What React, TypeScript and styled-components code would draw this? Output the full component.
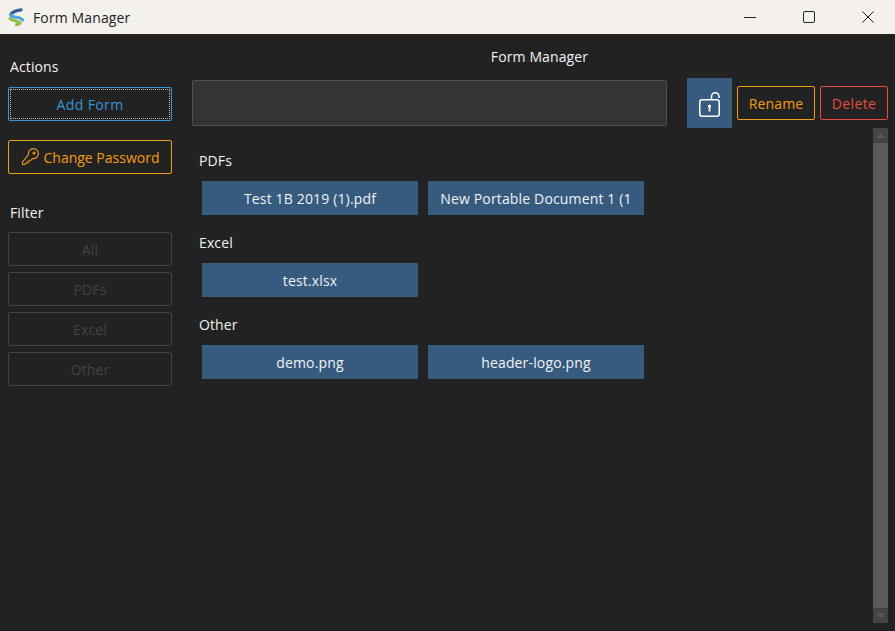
import React from 'react';
import styled, {createGlobalStyle} from 'styled-components';

const Global = createGlobalStyle`
  html, body {
    margin: 0;
    height: 100%;
    background: #222222;
    overflow: hidden;
  }
  * {
    box-sizing: border-box;
  }
`;

const Window = styled.div`
  width: 895px;
  height: 631px;
  display: flex;
  flex-direction: column;
  font-family: "Open Sans", "Noto Sans", sans-serif;
  font-size: 14px;
  letter-spacing: 0.12px;
  color: #f2f2f2;
  background: #222222;
`;

const TitleBar = styled.div`
  height: 34px;
  flex: none;
  display: flex;
  align-items: center;
  gap: 5px;
  background: #f4f1ed;
  color: #222;
  padding-left: 8px;
`;

const AppName = styled.div`
  margin-left: 3px;
  flex: 1;
`;

const WinButton = styled.div`
  width: 54px;
  height: 34px;
  display: flex;
  align-items: center;
  justify-content: center;
`;

const Body = styled.div`
  flex: 1;
  display: flex;
  min-height: 0;
`;

const Sidebar = styled.div`
  width: 180px;
  flex: none;
  padding: 23px 8px 0;
  display: flex;
  flex-direction: column;
`;

const SideLabel = styled.div`
  height: 20px;
  line-height: 20px;
  padding-left: 2px;
  margin-bottom: ${({$gap}: {$gap: number}) => $gap}px;
`;

const OutlineButton = styled.div<{$color: string; $dotted?: boolean}>`
  position: relative;
  height: 34px;
  display: flex;
  align-items: center;
  justify-content: center;
  gap: 5px;
  border: 1px solid ${({$color}) => $color};
  border-radius: 2px;
  color: ${({$color}) => $color};
  ${({$dotted}) => $dotted && `
    &::after {
      content: "";
      position: absolute;
      inset: 1px;
      border: 1px dotted #d8e8f4;
      opacity: 0.8;
    }
  `}
`;

const AddForm = styled(OutlineButton)`
  margin-bottom: 19px;
  letter-spacing: 0.4px;
`;

const ChangePassword = styled(OutlineButton)`
  margin-bottom: 29px;
  letter-spacing: 0;
`;

const FilterList = styled.div`
  display: flex;
  flex-direction: column;
  gap: 6px;
`;

const Main = styled.div`
  flex: 1;
  min-width: 0;
  padding: 12px 7px 8px 12px;
  display: flex;
  flex-direction: column;
`;

const Heading = styled.div`
  height: 22px;
  line-height: 22px;
  text-align: center;
  padding-right: 1px;
  margin-bottom: 10px;
`;

const Toolbar = styled.div`
  display: flex;
  align-items: center;
  height: 50px;
  flex: none;
`;

const SearchBox = styled.div`
  width: 475px;
  height: 46px;
  background: #333333;
  border: 1px solid #505050;
  border-radius: 2px;
  margin-right: 20px;
`;

const LockButton = styled.div`
  width: 45px;
  height: 50px;
  padding-top: 3px;
  background: #375a7f;
  display: flex;
  align-items: center;
  justify-content: center;
  margin-right: 5px;
`;

const Rename = styled(OutlineButton)`
  width: 78px;
  margin-right: 5px;
`;

const Delete = styled(OutlineButton)`
  width: 68px;
  letter-spacing: 0.4px;
`;

const Content = styled.div`
  flex: 1;
  display: flex;
  min-height: 0;
`;

const Sections = styled.div`
  flex: 1;
  padding: 23px 0 0 7px;
`;

const SectionTitle = styled.div`
  height: 20px;
  line-height: 20px;
  margin-bottom: 10px;
`;

const FileRow = styled.div`
  display: flex;
  gap: 10px;
  padding-left: 3px;
  margin-bottom: 18px;
`;

const FileButton = styled.div`
  width: 216px;
  height: 34px;
  padding: 1px 12px 0;
  background: #375a7f;
  color: #f2f2f2;
  line-height: 34px;
  text-align: center;
  white-space: nowrap;
  letter-spacing: 0.15px;
`;

const Scrollbar = styled.div`
  width: 15px;
  flex: none;
  display: flex;
  flex-direction: column;
  background: #5a5a5a;
`;

const ScrollArrow = styled.div`
  height: 15px;
  flex: none;
  background: #444444;
  display: flex;
  align-items: center;
  justify-content: center;
`;

const ScrollThumb = styled.div`
  flex: 1;
`;

const Logo = () => (
  <svg width="17" height="18" viewBox="0 0 17 18" fill="none" strokeWidth="3.200" strokeLinecap="round">
    <path d="M13 1.800 C8 2.600 3 4.500 2.800 7" stroke="#2f5f9e"/>
    <path d="M3 7.500 C5 10 13 8.500 14.500 12" stroke="#4ba6dc"/>
    <path d="M2 10.500 C3.500 13 11 12.500 12 15 C11.500 16.200 10 16.500 8.500 16.500" stroke="#8fc04a"/>
  </svg>
);

const UnlockIcon = () => (
  <svg width="22" height="25" viewBox="0 0 22 25" fill="none" stroke="#ffffff" strokeWidth="1.500">
    <rect x="0.750" y="7.750" width="19.500" height="16.500" rx="2.500"/>
    <path d="M12.500 7.500 V4.500 a3.750 3.750 0 0 1 7.500 0 V6"/>
    <circle cx="10.500" cy="14" r="1.600" fill="#ffffff" stroke="none"/>
    <path d="M10.500 14 V19.500" strokeWidth="1.800"/>
  </svg>
);

const KeyIcon = () => (
  <svg width="18" height="18" viewBox="0 0 18 18" fill="none" stroke="#f39c12" strokeWidth="1.100">
    <path d="M7.500 6.500 a5 5 0 1 1 4 4 L9 13 H7 V15 H5 L3.500 16.500 H1.500 V14 Z"/>
    <circle cx="13" cy="5" r="1" />
  </svg>
);

const files = [
  {title: 'PDFs', items: ['Test 1B 2019 (1).pdf', 'New Portable Document 1 (1']},
  {title: 'Excel', items: ['test.xlsx']},
  {title: 'Other', items: ['demo.png', 'header-logo.png']},
];

const App: React.FC = () => {
  return (
    <Window>
      <Global/>
      <TitleBar>
        <Logo/>
        <AppName>Form Manager</AppName>
        <WinButton>
          <svg width="12" height="12"><path d="M0 6.500 H12" stroke="#222" strokeWidth="1"/></svg>
        </WinButton>
        <WinButton>
          <svg width="12" height="12"><rect x="0.500" y="0.500" width="11" height="11" rx="1.500" fill="none" stroke="#222"/></svg>
        </WinButton>
        <WinButton>
          <svg width="12" height="12"><path d="M0.500 0.500 L11.500 11.500 M11.500 0.500 L0.500 11.500" stroke="#222"/></svg>
        </WinButton>
      </TitleBar>
      <Body>
        <Sidebar>
          <SideLabel $gap={10}>Actions</SideLabel>
          <AddForm $color="#3498db" $dotted>Add Form</AddForm>
          <ChangePassword $color="#f39c12"><KeyIcon/>Change Password</ChangePassword>
          <SideLabel $gap={9}>Filter</SideLabel>
          <FilterList>
            {['All', 'PDFs', 'Excel', 'Other'].map(name => (
              <OutlineButton key={name} $color="#444444">{name}</OutlineButton>
            ))}
          </FilterList>
        </Sidebar>
        <Main>
          <Heading>Form Manager</Heading>
          <Toolbar>
            <SearchBox/>
            <LockButton><UnlockIcon/></LockButton>
            <Rename $color="#f39c12">Rename</Rename>
            <Delete $color="#e74c3c">Delete</Delete>
          </Toolbar>
          <Content>
            <Sections>
              {files.map(section => (
                <React.Fragment key={section.title}>
                  <SectionTitle>{section.title}</SectionTitle>
                  <FileRow>
                    {section.items.map(item => <FileButton key={item}>{item}</FileButton>)}
                  </FileRow>
                </React.Fragment>
              ))}
            </Sections>
            <Scrollbar>
              <ScrollArrow>
                <svg width="9" height="5"><path d="M4.500 0 L9 5 H0 Z" fill="#5a5a5a"/></svg>
              </ScrollArrow>
              <ScrollThumb/>
              <ScrollArrow>
                <svg width="9" height="5"><path d="M0 0 H9 L4.500 5 Z" fill="#5a5a5a"/></svg>
              </ScrollArrow>
            </Scrollbar>
          </Content>
        </Main>
      </Body>
    </Window>
  );
};

export default App;
